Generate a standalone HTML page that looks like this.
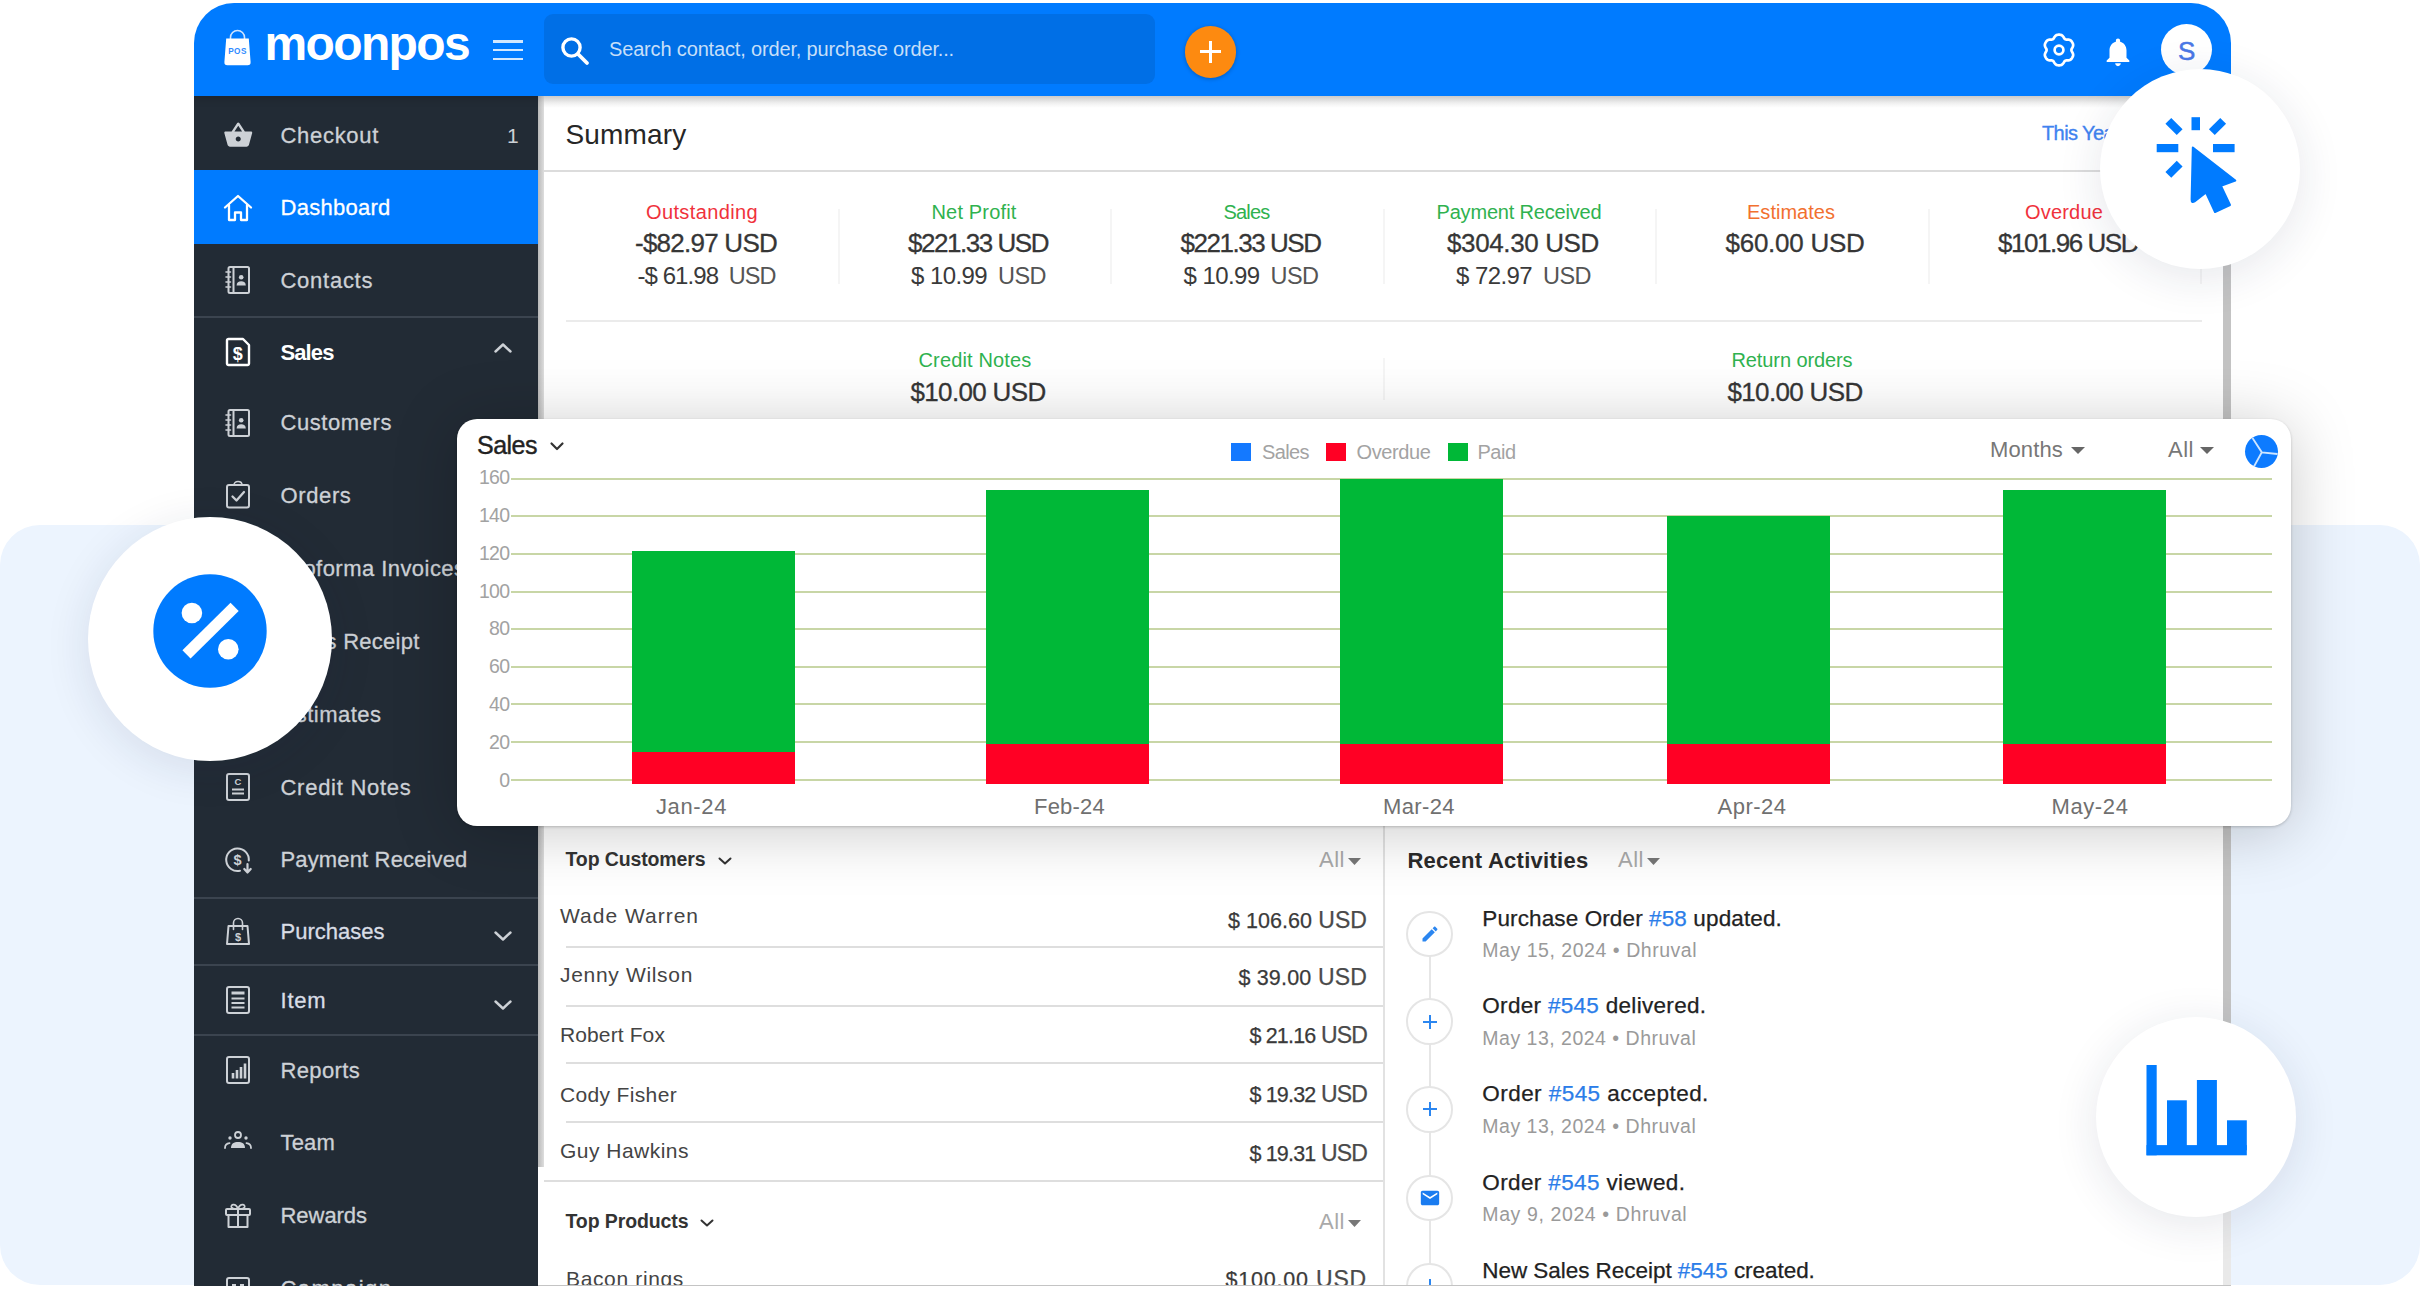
<!DOCTYPE html>
<html lang="en"><head><meta charset="utf-8"><title>moonpos dashboard</title>
<style>
html,body{margin:0;padding:0;}
body{width:2420px;height:1292px;overflow:hidden;background:#fff;position:relative;font-family:"Liberation Sans",sans-serif;}
.t{position:absolute;white-space:nowrap;line-height:1;}
svg{position:absolute;overflow:visible;}
#win{position:absolute;left:194px;top:3px;width:2037px;height:1283px;border-radius:40px 40px 0 0;overflow:hidden;background:#fff;}
</style></head><body>
<div style="position:absolute;left:0.0px;top:525.0px;width:2420.0px;height:760.0px;background:#ecf4fe;border-radius:40px;"></div>
<div id="win">
<div style="position:absolute;left:350.0px;top:93.0px;width:1679.0px;height:12.0px;background:linear-gradient(#e6e6e6,#fff);"></div>
<div style="position:absolute;left:2029.0px;top:93.0px;width:8.0px;height:1190.0px;background:#e9e9e9;"></div>
<div style="position:absolute;left:2029.0px;top:93.0px;width:8.0px;height:1030.0px;background:#c3c3c3;"></div>
<span id="t22" class="t" style="top:118.3px;font-size:28px;color:#262626;letter-spacing:0.172px;left:371.5px;">Summary</span>
<span id="t23" class="t" style="top:120.1px;font-size:20px;color:#3f83f0;letter-spacing:-0.599px;left:1848.0px;-webkit-text-stroke:.35px #3f83f0;">This Year</span>
<div style="position:absolute;left:350.0px;top:167.0px;width:1679.0px;height:2.0px;background:#dcdcdc;"></div>
<span id="t24" class="t" style="top:198.7px;font-size:20px;color:#f0323c;letter-spacing:0.376px;left:508.0px;transform:translateX(-50%);">Outstanding</span>
<span id="t25" class="t" style="top:227.4px;font-size:26px;color:#363636;letter-spacing:-0.756px;left:512.0px;transform:translateX(-50%);-webkit-text-stroke:.3px;">-$82.97 USD</span>
<span id="t26" class="t" style="top:260.7px;font-size:24px;color:#3a3a3a;letter-spacing:-0.936px;left:512.5px;transform:translateX(-50%);">-$ 61.98<span style="color:#555;font-size:23.5px;margin-left:5px"> USD</span></span>
<span id="t27" class="t" style="top:198.7px;font-size:20px;color:#2fb24f;letter-spacing:0.164px;left:780.0px;transform:translateX(-50%);">Net Profit</span>
<span id="t28" class="t" style="top:227.4px;font-size:26px;color:#363636;letter-spacing:-1.464px;left:784.0px;transform:translateX(-50%);-webkit-text-stroke:.3px;">$221.33 USD</span>
<span id="t29" class="t" style="top:260.7px;font-size:24px;color:#3a3a3a;letter-spacing:-0.567px;left:784.5px;transform:translateX(-50%);">$ 10.99<span style="color:#555;font-size:23.5px;margin-left:5px"> USD</span></span>
<span id="t30" class="t" style="top:198.7px;font-size:20px;color:#2fb24f;letter-spacing:-0.806px;left:1052.5px;transform:translateX(-50%);">Sales</span>
<span id="t31" class="t" style="top:227.4px;font-size:26px;color:#363636;letter-spacing:-1.464px;left:1056.5px;transform:translateX(-50%);-webkit-text-stroke:.3px;">$221.33 USD</span>
<span id="t32" class="t" style="top:260.7px;font-size:24px;color:#3a3a3a;letter-spacing:-0.567px;left:1057.0px;transform:translateX(-50%);">$ 10.99<span style="color:#555;font-size:23.5px;margin-left:5px"> USD</span></span>
<span id="t33" class="t" style="top:198.7px;font-size:20px;color:#2fb24f;letter-spacing:-0.180px;left:1325.0px;transform:translateX(-50%);">Payment Received</span>
<span id="t34" class="t" style="top:227.4px;font-size:26px;color:#363636;letter-spacing:-0.374px;left:1329.0px;transform:translateX(-50%);-webkit-text-stroke:.3px;">$304.30 USD</span>
<span id="t35" class="t" style="top:260.7px;font-size:24px;color:#3a3a3a;letter-spacing:-0.567px;left:1329.5px;transform:translateX(-50%);">$ 72.97<span style="color:#555;font-size:23.5px;margin-left:5px"> USD</span></span>
<span id="t36" class="t" style="top:198.7px;font-size:20px;color:#f2702f;letter-spacing:0.021px;left:1597.0px;transform:translateX(-50%);">Estimates</span>
<span id="t37" class="t" style="top:227.4px;font-size:26px;color:#363636;letter-spacing:-0.266px;left:1601.0px;transform:translateX(-50%);-webkit-text-stroke:.3px;">$60.00 USD</span>
<span id="t38" class="t" style="top:198.7px;font-size:20px;color:#f0323c;letter-spacing:0.183px;left:1870.0px;transform:translateX(-50%);">Overdue</span>
<span id="t39" class="t" style="top:227.4px;font-size:26px;color:#363636;letter-spacing:-1.464px;left:1874.0px;transform:translateX(-50%);-webkit-text-stroke:.3px;">$101.96 USD</span>
<div style="position:absolute;left:644.0px;top:206.0px;width:2.0px;height:75.0px;background:#f5f5f5;"></div>
<div style="position:absolute;left:916.4px;top:206.0px;width:2.0px;height:75.0px;background:#f5f5f5;"></div>
<div style="position:absolute;left:1189.0px;top:206.0px;width:2.0px;height:75.0px;background:#f5f5f5;"></div>
<div style="position:absolute;left:1461.0px;top:206.0px;width:2.0px;height:75.0px;background:#f5f5f5;"></div>
<div style="position:absolute;left:1734.0px;top:206.0px;width:2.0px;height:75.0px;background:#f5f5f5;"></div>
<div style="position:absolute;left:2006.0px;top:206.0px;width:2.0px;height:75.0px;background:#f5f5f5;"></div>
<div style="position:absolute;left:371.5px;top:317.0px;width:1636.0px;height:2.0px;background:#ebebeb;"></div>
<span id="t40" class="t" style="top:347.1px;font-size:20px;color:#2fb24f;letter-spacing:0.154px;left:781.0px;transform:translateX(-50%);">Credit Notes</span>
<span id="t41" class="t" style="top:376.0px;font-size:26px;color:#363636;letter-spacing:-0.666px;left:784.0px;transform:translateX(-50%);-webkit-text-stroke:.3px;">$10.00 USD</span>
<span id="t42" class="t" style="top:347.1px;font-size:20px;color:#2fb24f;letter-spacing:-0.099px;left:1598.0px;transform:translateX(-50%);">Return orders</span>
<span id="t43" class="t" style="top:376.0px;font-size:26px;color:#363636;letter-spacing:-0.666px;left:1601.0px;transform:translateX(-50%);-webkit-text-stroke:.3px;">$10.00 USD</span>
<div style="position:absolute;left:1189.0px;top:355.0px;width:2.0px;height:42.0px;background:#f5f5f5;"></div>
<div style="position:absolute;left:1188.5px;top:823.0px;width:2.0px;height:460.0px;background:#e2e2e2;"></div>
<span id="t44" class="t" style="top:847.2px;font-size:19.5px;color:#333;font-weight:700;letter-spacing:-0.121px;left:371.5px;">Top Customers</span>
<span id="t45" class="t" style="top:1208.9px;font-size:19.5px;color:#333;font-weight:700;letter-spacing:-0.102px;left:371.5px;">Top Products</span>
<svg style="left:523.5px;top:853.5px" width="14" height="8" viewBox="0 0 14 8" fill="none" stroke="#333" stroke-width="2" stroke-linecap="round" stroke-linejoin="round"><path d="M1.500 1.500 L7 6.500 L12.500 1.500"/></svg>
<svg style="left:505.5px;top:1215.5px" width="14" height="8" viewBox="0 0 14 8" fill="none" stroke="#333" stroke-width="2" stroke-linecap="round" stroke-linejoin="round"><path d="M1.500 1.500 L7 6.500 L12.500 1.500"/></svg>
<span id="t46" class="t" style="top:845.9px;font-size:22px;color:#a9a9a9;letter-spacing:0.516px;left:1125.0px;">All</span><svg style="left:1154.0px;top:854.5px" width="13" height="7" viewBox="0 0 13 7"><path d="M0 0 H13 L6.500 7 Z" fill="#777"/></svg>
<span id="t47" class="t" style="top:1208.4px;font-size:22px;color:#a9a9a9;letter-spacing:0.516px;left:1125.0px;">All</span><svg style="left:1154.0px;top:1217.0px" width="13" height="7" viewBox="0 0 13 7"><path d="M0 0 H13 L6.500 7 Z" fill="#777"/></svg>
<span id="t48" class="t" style="top:845.9px;font-size:22px;color:#a9a9a9;letter-spacing:0.516px;left:1424.0px;">All</span><svg style="left:1453.0px;top:854.5px" width="13" height="7" viewBox="0 0 13 7"><path d="M0 0 H13 L6.500 7 Z" fill="#777"/></svg>
<span id="t49" class="t" style="top:901.5px;font-size:21px;color:#444;letter-spacing:1.001px;left:366.0px;">Wade Warren</span>
<span id="t50" class="t" style="top:905.8px;font-size:21.5px;color:#3a3a3a;letter-spacing:0.029px;right:864.0px;-webkit-text-stroke:.25px;">$ 106.60<span style="color:#4a4a4a;font-size:23px"> USD</span></span>
<span id="t51" class="t" style="top:960.7px;font-size:21px;color:#444;letter-spacing:0.676px;left:366.0px;">Jenny Wilson</span>
<span id="t52" class="t" style="top:963.1px;font-size:21.5px;color:#3a3a3a;letter-spacing:0.165px;right:864.0px;-webkit-text-stroke:.25px;">$ 39.00<span style="color:#4a4a4a;font-size:23px"> USD</span></span>
<span id="t53" class="t" style="top:1021.0px;font-size:21px;color:#444;letter-spacing:0.113px;left:366.0px;">Robert Fox</span>
<span id="t54" class="t" style="top:1020.8px;font-size:21.5px;color:#3a3a3a;letter-spacing:-0.835px;right:864.0px;-webkit-text-stroke:.25px;">$ 21.16<span style="color:#4a4a4a;font-size:23px"> USD</span></span>
<span id="t55" class="t" style="top:1080.5px;font-size:21px;color:#444;letter-spacing:0.345px;left:366.0px;">Cody Fisher</span>
<span id="t56" class="t" style="top:1080.4px;font-size:21.5px;color:#3a3a3a;letter-spacing:-0.835px;right:864.0px;-webkit-text-stroke:.25px;">$ 19.32<span style="color:#4a4a4a;font-size:23px"> USD</span></span>
<span id="t57" class="t" style="top:1137.2px;font-size:21px;color:#444;letter-spacing:0.482px;left:366.0px;">Guy Hawkins</span>
<span id="t58" class="t" style="top:1138.5px;font-size:21.5px;color:#3a3a3a;letter-spacing:-0.835px;right:864.0px;-webkit-text-stroke:.25px;">$ 19.31<span style="color:#4a4a4a;font-size:23px"> USD</span></span>
<div style="position:absolute;left:371.5px;top:943.0px;width:817.0px;height:2.0px;background:#dedede;"></div>
<div style="position:absolute;left:371.5px;top:1001.5px;width:817.0px;height:2.0px;background:#dedede;"></div>
<div style="position:absolute;left:371.5px;top:1059.0px;width:817.0px;height:2.0px;background:#dedede;"></div>
<div style="position:absolute;left:371.5px;top:1117.5px;width:817.0px;height:2.0px;background:#dedede;"></div>
<div style="position:absolute;left:350.0px;top:1177.0px;width:839.0px;height:2.0px;background:#dedede;"></div>
<span id="t59" class="t" style="top:1265.0px;font-size:21px;color:#444;letter-spacing:0.645px;left:372.0px;">Bacon rings</span>
<span id="t60" class="t" style="top:1264.8px;font-size:21.5px;color:#3a3a3a;letter-spacing:0.803px;right:864.0px;-webkit-text-stroke:.25px;">$100.00<span style="color:#4a4a4a;font-size:23px"> USD</span></span>
<span id="t61" class="t" style="top:847.4px;font-size:22px;color:#2b2b2b;font-weight:700;letter-spacing:0.266px;left:1213.4px;">Recent Activities</span>
<div style="position:absolute;left:1234.8px;top:931.0px;width:2.0px;height:360.0px;background:#e6e6e6;"></div>
<div style="position:absolute;left:1212.4px;top:907.6px;width:42.8px;height:42.8px;background:#fff;border:2px solid #e5e5e5;border-radius:50%;"></div>
<span id="t62" class="t" style="top:904.7px;font-size:22.5px;color:#222;letter-spacing:0.116px;left:1288.3px;-webkit-text-stroke:.25px;">Purchase Order <span style="color:#2b7de9">#58</span> updated.</span>
<span id="t63" class="t" style="top:938.2px;font-size:19.5px;color:#9a9a9a;letter-spacing:0.535px;left:1288.3px;">May 15, 2024 • Dhruval</span>
<svg style="left:1225.8px;top:921.0px" width="20" height="20" viewBox="0 0 24 24"><path fill="#2b86f0" d="M3 17.250V21h3.750L17.810 9.940l-3.750-3.750L3 17.250zM20.710 7.040c.39-.39.39-1.020 0-1.410l-2.340-2.340c-.39-.39-1.020-.39-1.410 0l-1.830 1.830 3.750 3.750 1.830-1.830z"/></svg>
<div style="position:absolute;left:1212.4px;top:995.3px;width:42.8px;height:42.8px;background:#fff;border:2px solid #e5e5e5;border-radius:50%;"></div>
<span id="t64" class="t" style="top:992.4px;font-size:22.5px;color:#222;letter-spacing:0.303px;left:1288.3px;-webkit-text-stroke:.25px;">Order <span style="color:#2b7de9">#545</span> delivered.</span>
<span id="t65" class="t" style="top:1025.9px;font-size:19.5px;color:#9a9a9a;letter-spacing:0.499px;left:1288.3px;">May 13, 2024 • Dhruval</span>
<div style="position:absolute;left:1228.8px;top:1017.7px;width:14.0px;height:2.0px;background:#2b86f0;"></div>
<div style="position:absolute;left:1234.8px;top:1011.7px;width:2.0px;height:14.0px;background:#2b86f0;"></div>
<div style="position:absolute;left:1212.4px;top:1083.0px;width:42.8px;height:42.8px;background:#fff;border:2px solid #e5e5e5;border-radius:50%;"></div>
<span id="t66" class="t" style="top:1080.1px;font-size:22.5px;color:#222;letter-spacing:0.442px;left:1288.3px;-webkit-text-stroke:.25px;">Order <span style="color:#2b7de9">#545</span> accepted.</span>
<span id="t67" class="t" style="top:1113.6px;font-size:19.5px;color:#9a9a9a;letter-spacing:0.499px;left:1288.3px;">May 13, 2024 • Dhruval</span>
<div style="position:absolute;left:1228.8px;top:1105.4px;width:14.0px;height:2.0px;background:#2b86f0;"></div>
<div style="position:absolute;left:1234.8px;top:1099.4px;width:2.0px;height:14.0px;background:#2b86f0;"></div>
<div style="position:absolute;left:1212.4px;top:1171.6px;width:42.8px;height:42.8px;background:#fff;border:2px solid #e5e5e5;border-radius:50%;"></div>
<span id="t68" class="t" style="top:1168.7px;font-size:22.5px;color:#222;letter-spacing:0.368px;left:1288.3px;-webkit-text-stroke:.25px;">Order <span style="color:#2b7de9">#545</span> viewed.</span>
<span id="t69" class="t" style="top:1202.2px;font-size:19.5px;color:#9a9a9a;letter-spacing:0.610px;left:1288.3px;">May 9, 2024 • Dhruval</span>
<svg style="left:1224.8px;top:1184.0px" width="22" height="22" viewBox="0 0 24 24"><path fill="#1a7cf0" d="M20 4H4c-1.100 0-1.990.9-1.990 2L2 18c0 1.100.9 2 2 2h16c1.100 0 2-.9 2-2V6c0-1.100-.9-2-2-2zm0 4l-8 5-8-5V6l8 5 8-5v2z"/></svg>
<div style="position:absolute;left:1212.4px;top:1259.6px;width:42.8px;height:42.8px;background:#fff;border:2px solid #e5e5e5;border-radius:50%;"></div>
<span id="t70" class="t" style="top:1256.7px;font-size:22.5px;color:#222;letter-spacing:-0.047px;left:1288.3px;-webkit-text-stroke:.25px;">New Sales Receipt <span style="color:#2b7de9">#545</span> created.</span>
<div style="position:absolute;left:1228.8px;top:1282.0px;width:14.0px;height:2.0px;background:#2b86f0;"></div>
<div style="position:absolute;left:1234.8px;top:1276.0px;width:2.0px;height:14.0px;background:#2b86f0;"></div>
<div style="position:absolute;left:0.0px;top:93.0px;width:344.0px;height:1190.0px;background:#222b35;"></div>
<div style="position:absolute;left:344.0px;top:93.0px;width:6.0px;height:1190.0px;background:#fff;"></div>
<div style="position:absolute;left:344.0px;top:93.0px;width:6.0px;height:1071.0px;background:linear-gradient(90deg,#b9b9b9,#dedede);"></div>
<div style="position:absolute;left:0.0px;top:167.0px;width:344.0px;height:73.5px;background:#007bff;"></div>
<div style="position:absolute;left:0.0px;top:313.0px;width:344.0px;height:2.0px;background:#3b444f;"></div>
<div style="position:absolute;left:0.0px;top:893.5px;width:344.0px;height:2.0px;background:#3b444f;"></div>
<div style="position:absolute;left:0.0px;top:961.0px;width:344.0px;height:2.0px;background:#3b444f;"></div>
<div style="position:absolute;left:0.0px;top:1031.0px;width:344.0px;height:2.0px;background:#3b444f;"></div>
<span id="t4" class="t" style="top:122.1px;font-size:22px;color:#cdd1d6;letter-spacing:0.693px;left:86.5px;-webkit-text-stroke:.3px #cdd1d6;">Checkout</span>
<span id="t5" class="t" style="top:194.1px;font-size:22px;color:#fff;letter-spacing:0.262px;left:86.5px;-webkit-text-stroke:.3px #fff;">Dashboard</span>
<span id="t6" class="t" style="top:266.6px;font-size:22px;color:#cdd1d6;letter-spacing:0.734px;left:86.5px;-webkit-text-stroke:.3px #cdd1d6;">Contacts</span>
<svg style="left:29.7px;top:261.7px" width="28" height="30" viewBox="0 0 28 30" fill="none" stroke="#cdd1d6" stroke-width="2" stroke-linejoin="round" stroke-linecap="round"><rect x="4.5" y="2" width="20.5" height="26" rx="1.5"/><path d="M9.5 2 V28"/><path d="M2 7 H6.5 M2 12 H6.5 M2 17 H6.5 M2 22 H6.5" stroke-width="1.6"/><circle cx="17.2" cy="12.2" r="2.3" fill="#cdd1d6" stroke="none"/><path d="M12.6 20.5 c0-3 2-4.2 4.6-4.200 s4.600 1.200 4.600 4.200 z" fill="#cdd1d6" stroke="none"/></svg>
<span id="t7" class="t" style="top:339.0px;font-size:22px;color:#fff;font-weight:700;letter-spacing:-0.900px;left:86.5px;">Sales</span>
<svg style="left:29.7px;top:334.1px" width="28" height="30" viewBox="0 0 28 30" fill="none" stroke="#fff" stroke-width="2" stroke-linejoin="round" stroke-linecap="round"><path d="M3 3.500 a1.500 1.500 0 0 1 1.500-1.500 H19 L25 8 V26.500 a1.500 1.500 0 0 1-1.500 1.500 H4.500 a1.500 1.500 0 0 1-1.500-1.500 Z" stroke-width="2.4"/><text x="13.800" y="23" font-family="Liberation Sans, sans-serif" font-size="18" font-weight="700" fill="#fff" stroke="none" text-anchor="middle">$</text></svg>
<span id="t8" class="t" style="top:409.4px;font-size:22px;color:#cdd1d6;letter-spacing:0.571px;left:86.5px;-webkit-text-stroke:.3px #cdd1d6;">Customers</span>
<svg style="left:29.7px;top:404.5px" width="28" height="30" viewBox="0 0 28 30" fill="none" stroke="#cdd1d6" stroke-width="2" stroke-linejoin="round" stroke-linecap="round"><rect x="4.5" y="2" width="20.5" height="26" rx="1.5"/><path d="M9.5 2 V28"/><path d="M2 7 H6.5 M2 12 H6.5 M2 17 H6.5 M2 22 H6.5" stroke-width="1.6"/><circle cx="17.2" cy="12.2" r="2.3" fill="#cdd1d6" stroke="none"/><path d="M12.6 20.5 c0-3 2-4.2 4.6-4.200 s4.600 1.200 4.600 4.200 z" fill="#cdd1d6" stroke="none"/></svg>
<span id="t9" class="t" style="top:481.6px;font-size:22px;color:#cdd1d6;letter-spacing:0.625px;left:86.5px;-webkit-text-stroke:.3px #cdd1d6;">Orders</span>
<svg style="left:29.7px;top:476.7px" width="28" height="30" viewBox="0 0 28 30" fill="none" stroke="#cdd1d6" stroke-width="2" stroke-linejoin="round" stroke-linecap="round"><rect x="3" y="5" width="22" height="22.500" rx="2"/><path d="M10 5 c0-2 1.500-3.500 4-3.500 s4 1.500 4 3.500" stroke-width="1.600"/><path d="M8.500 16.500 L12.500 20.500 L20 12" stroke-width="2.300"/></svg>
<span id="t10" class="t" style="top:555.1px;font-size:22px;color:#cdd1d6;letter-spacing:0.453px;left:86.5px;-webkit-text-stroke:.3px #cdd1d6;">Proforma Invoices</span>
<svg style="left:29.7px;top:550.2px" width="28" height="30" viewBox="0 0 28 30" fill="none" stroke="#cdd1d6" stroke-width="2" stroke-linejoin="round" stroke-linecap="round"><rect x="3" y="2" width="22" height="26" rx="2"/></svg>
<span id="t11" class="t" style="top:628.1px;font-size:22px;color:#cdd1d6;letter-spacing:0.250px;left:86.5px;-webkit-text-stroke:.3px #cdd1d6;">Sales Receipt</span>
<svg style="left:29.7px;top:623.2px" width="28" height="30" viewBox="0 0 28 30" fill="none" stroke="#cdd1d6" stroke-width="2" stroke-linejoin="round" stroke-linecap="round"><rect x="3" y="2" width="22" height="26" rx="2"/></svg>
<span id="t12" class="t" style="top:701.1px;font-size:22px;color:#cdd1d6;letter-spacing:0.490px;left:86.5px;-webkit-text-stroke:.3px #cdd1d6;">Estimates</span>
<svg style="left:29.7px;top:696.2px" width="28" height="30" viewBox="0 0 28 30" fill="none" stroke="#cdd1d6" stroke-width="2" stroke-linejoin="round" stroke-linecap="round"><rect x="3" y="2" width="22" height="26" rx="2"/></svg>
<span id="t13" class="t" style="top:773.6px;font-size:22px;color:#cdd1d6;letter-spacing:0.727px;left:86.5px;-webkit-text-stroke:.3px #cdd1d6;">Credit Notes</span>
<svg style="left:29.7px;top:768.7px" width="28" height="30" viewBox="0 0 28 30" fill="none" stroke="#cdd1d6" stroke-width="2" stroke-linejoin="round" stroke-linecap="round"><rect x="3" y="2" width="22" height="26" rx="2"/><text x="14" y="13" font-family="Liberation Sans, sans-serif" font-size="9.500" font-weight="700" fill="#cdd1d6" stroke="none" text-anchor="middle">C</text><path d="M8 17.500 H20 M8 21.500 H20" stroke-width="2.200" stroke-linecap="butt"/></svg>
<span id="t14" class="t" style="top:846.4px;font-size:22px;color:#cdd1d6;letter-spacing:0.146px;left:86.5px;-webkit-text-stroke:.3px #cdd1d6;">Payment Received</span>
<svg style="left:29.7px;top:841.5px" width="28" height="30" viewBox="0 0 28 30" fill="none" stroke="#cdd1d6" stroke-width="2" stroke-linejoin="round" stroke-linecap="round"><path d="M24.800 15.500 A11.300 11.300 0 1 0 16 25.800" stroke-width="2"/><text x="13.500" y="20" font-family="Liberation Sans, sans-serif" font-size="14.500" font-weight="700" fill="#cdd1d6" stroke="none" text-anchor="middle">$</text><path d="M23.500 19 V27 M20.300 24 L23.500 27.500 L26.700 24" stroke-width="2.200"/></svg>
<span id="t15" class="t" style="top:917.6px;font-size:22px;color:#d9dde6;letter-spacing:0.005px;left:86.5px;-webkit-text-stroke:.3px #d9dde6;">Purchases</span>
<svg style="left:29.7px;top:912.7px" width="28" height="30" viewBox="0 0 28 30" fill="none" stroke="#cdd1d6" stroke-width="2" stroke-linejoin="round" stroke-linecap="round"><path d="M4.500 10 H23.500 L25 28 H3 Z"/><path d="M9.500 13.500 V7 a4.500 4.500 0 0 1 9 0 V13.500" stroke-width="1.600"/><text x="14" y="25" font-family="Liberation Sans, sans-serif" font-size="11" font-weight="700" fill="#cdd1d6" stroke="none" text-anchor="middle">$</text></svg>
<span id="t16" class="t" style="top:987.1px;font-size:22px;color:#d9dde6;letter-spacing:0.801px;left:86.5px;-webkit-text-stroke:.3px #d9dde6;">Item</span>
<svg style="left:29.7px;top:982.2px" width="28" height="30" viewBox="0 0 28 30" fill="none" stroke="#cdd1d6" stroke-width="2" stroke-linejoin="round" stroke-linecap="round"><rect x="3" y="2" width="22" height="26" rx="2"/><path d="M7.500 8 H20.500" stroke-width="3" stroke-linecap="butt"/><path d="M7.500 13.500 H20.500 M7.500 18 H20.500 M7.500 22.500 H20.500" stroke-width="2" stroke-linecap="butt"/></svg>
<span id="t17" class="t" style="top:1056.6px;font-size:22px;color:#cdd1d6;letter-spacing:0.350px;left:86.5px;-webkit-text-stroke:.3px #cdd1d6;">Reports</span>
<svg style="left:29.7px;top:1051.7px" width="28" height="30" viewBox="0 0 28 30" fill="none" stroke="#cdd1d6" stroke-width="2" stroke-linejoin="round" stroke-linecap="round"><rect x="3" y="2" width="22" height="26" rx="2"/><path d="M9 23.500 V18 M13 23.500 V15 M17 23.500 V12 M21 23.500 V8.500" stroke-width="2.600" stroke-linecap="butt"/></svg>
<span id="t18" class="t" style="top:1129.2px;font-size:22px;color:#cdd1d6;letter-spacing:0.176px;left:86.5px;-webkit-text-stroke:.3px #cdd1d6;">Team</span>
<svg style="left:29.7px;top:1124.3px" width="28" height="30" viewBox="0 0 28 30" fill="none" stroke="#cdd1d6" stroke-width="2" stroke-linejoin="round" stroke-linecap="round"><circle cx="14" cy="8" r="3" stroke-width="1.800"/><circle cx="6" cy="11" r="1.700" fill="#cdd1d6" stroke="none"/><circle cx="22" cy="11" r="1.700" fill="#cdd1d6" stroke="none"/><path d="M7 21 c0-4.500 3-6 7-6 s7 1.500 7 6 z" fill="#cdd1d6" stroke="none"/><path d="M1 21 c0-3 1.500-4.500 4.500-4.800 M27 21 c0-3-1.500-4.500-4.500-4.800" stroke-width="1.800"/></svg>
<span id="t19" class="t" style="top:1202.2px;font-size:22px;color:#cdd1d6;letter-spacing:-0.045px;left:86.5px;-webkit-text-stroke:.3px #cdd1d6;">Rewards</span>
<svg style="left:29.7px;top:1197.3px" width="28" height="30" viewBox="0 0 28 30" fill="none" stroke="#cdd1d6" stroke-width="2" stroke-linejoin="round" stroke-linecap="round"><rect x="2" y="9" width="24" height="6" rx="1"/><path d="M4.500 15 V27 H23.500 V15 M14 9 V27"/><path d="M14 9 c-2-6-8-5-6.500-1.500 c1 2 4 1.500 6.500 1.500 c2.500 0 5.500 .5 6.500-1.500 c1.500-3.500-4.500-4.500-6.500 1.500" stroke-width="1.700"/></svg>
<span id="t20" class="t" style="top:1275.1px;font-size:22px;color:#cdd1d6;letter-spacing:1.465px;left:86.5px;-webkit-text-stroke:.3px #cdd1d6;">Campaign</span>
<svg style="left:29.7px;top:1270.2px" width="28" height="30" viewBox="0 0 28 30" fill="none" stroke="#cdd1d6" stroke-width="2" stroke-linejoin="round" stroke-linecap="round"><rect x="3" y="5" width="22" height="22" rx="2"/><rect x="8" y="11" width="4" height="4" fill="#cdd1d6" stroke="none"/><rect x="16" y="11" width="4" height="4" fill="#cdd1d6" stroke="none"/></svg>
<svg style="left:28.5px;top:116.5px" width="30.500" height="30.500" viewBox="0 0 24 24"><path fill="#cdd1d6" d="M17.210 9l-4.380-6.560c-.19-.28-.51-.42-.83-.42-.32 0-.64.14-.83.43L6.790 9H2c-.55 0-1 .45-1 1 0 .09.010.18.040.27l2.540 9.270c.23.84 1 1.460 1.920 1.460h13c.92 0 1.690-.62 1.930-1.460l2.540-9.270L23 10c0-.55-.45-1-1-1h-4.790zM9 9l3-4.400L15 9H9zm3 8c-1.100 0-2-.9-2-2s.9-2 2-2 2 .9 2 2-.9 2-2 2z"/></svg>
<svg style="left:28.7px;top:190.5px" width="30" height="28" viewBox="0 0 30 28" fill="none" stroke="#fff" stroke-width="2.300" stroke-linejoin="round" stroke-linecap="round"><path d="M2 13.500 L15 2 L28 13.500"/><path d="M6 11 V26 H12 V18.500 H18 V26 H24 V11"/></svg>
<span id="t21" class="t" style="top:121.7px;font-size:21px;color:#cdd1d6;left:313.0px;">1</span>
<svg style="left:299.7px;top:340.0px" width="18" height="10" viewBox="0 0 18 10" fill="none" stroke="#cdd1d6" stroke-width="2.400" stroke-linecap="round" stroke-linejoin="round"><path d="M1.500 8.500 L9 1.500 L16.500 8.500"/></svg>
<svg style="left:299.7px;top:927.5px" width="18" height="10" viewBox="0 0 18 10" fill="none" stroke="#cdd1d6" stroke-width="2.400" stroke-linecap="round" stroke-linejoin="round"><path d="M1.500 1.500 L9 8.500 L16.500 1.500"/></svg>
<svg style="left:299.7px;top:996.5px" width="18" height="10" viewBox="0 0 18 10" fill="none" stroke="#cdd1d6" stroke-width="2.400" stroke-linecap="round" stroke-linejoin="round"><path d="M1.500 1.500 L9 8.500 L16.500 1.500"/></svg>
<div style="position:absolute;left:0.0px;top:0.0px;width:2037.0px;height:93.0px;background:#007bff;box-shadow:0 2px 9px rgba(0,0,0,.18);"></div>
<svg style="left:29px;top:25px" width="30" height="40" viewBox="0 0 30 40"><path d="M7.5 12 V9.5 a7 7 0 0 1 14 0 V12" fill="none" stroke="#cfe4ff" stroke-width="1.6"/><path d="M3.2 10.5 H25.8 L27.6 34 a3 3 0 0 1 -3 3.2 H4.4 a3 3 0 0 1 -3 -3.2 Z" fill="#fff"/><text x="14.5" y="26.3" font-family="Liberation Sans, sans-serif" font-weight="700" font-size="8.2" fill="#2f8bff" text-anchor="middle" letter-spacing=".4">POS</text></svg>
<span id="t1" class="t" style="top:17.2px;font-size:48px;color:#fff;font-weight:700;letter-spacing:-1.641px;left:70.5px;">moonpos</span>
<div style="position:absolute;left:298.5px;top:37.3px;width:30.0px;height:2.4px;background:rgba(255,255,255,.82);"></div>
<div style="position:absolute;left:298.5px;top:46.1px;width:30.0px;height:2.4px;background:rgba(255,255,255,.82);"></div>
<div style="position:absolute;left:298.5px;top:54.8px;width:30.0px;height:2.4px;background:rgba(255,255,255,.82);"></div>
<div style="position:absolute;left:350.0px;top:11.0px;width:611.0px;height:69.5px;background:#006fe6;border-radius:9px;"></div>
<svg style="left:365px;top:32px" width="32" height="32" viewBox="0 0 32 32"><circle cx="12.5" cy="12.5" r="8.6" fill="none" stroke="#fff" stroke-width="3.4"/><path d="M19 19 L28 28" stroke="#fff" stroke-width="3.8" stroke-linecap="round"/></svg>
<span id="t2" class="t" style="top:35.6px;font-size:20px;color:rgba(255,255,255,.78);letter-spacing:-0.158px;left:415.0px;">Search contact, order, purchase order...</span>
<div style="position:absolute;left:990.5px;top:23.0px;width:51.5px;height:51.5px;background:#fd8a10;border-radius:50%;box-shadow:0 1px 4px rgba(0,0,0,.25);"></div>
<div style="position:absolute;left:1005.5px;top:47.3px;width:21.5px;height:3.0px;background:#fff;"></div>
<div style="position:absolute;left:1014.8px;top:38.0px;width:3.0px;height:21.5px;background:#fff;"></div>
<svg style="left:1846.8px;top:29.0px" width="36" height="36" viewBox="0 0 36 36" fill="none" stroke="#fff" stroke-width="2.700" stroke-linejoin="round"><path d="M18.00 2.70 L18.80 2.72 L19.59 2.83 L20.37 3.06 L21.09 3.45 L21.74 4.03 L22.31 4.73 L22.80 5.50 L23.24 6.23 L23.69 6.84 L24.20 7.26 L24.82 7.49 L25.57 7.58 L26.42 7.60 L27.33 7.63 L28.23 7.77 L29.05 8.05 L29.76 8.48 L30.34 9.03 L30.83 9.67 L31.25 10.35 L31.63 11.06 L31.94 11.79 L32.13 12.58 L32.14 13.40 L31.97 14.26 L31.64 15.10 L31.22 15.91 L30.81 16.65 L30.51 17.34 L30.40 18.00 L30.51 18.66 L30.81 19.35 L31.22 20.09 L31.64 20.90 L31.97 21.74 L32.14 22.60 L32.13 23.42 L31.94 24.21 L31.63 24.94 L31.25 25.65 L30.83 26.33 L30.34 26.97 L29.76 27.52 L29.05 27.95 L28.23 28.23 L27.33 28.37 L26.42 28.40 L25.57 28.42 L24.82 28.51 L24.20 28.74 L23.69 29.16 L23.24 29.77 L22.80 30.50 L22.31 31.27 L21.74 31.97 L21.09 32.55 L20.37 32.94 L19.59 33.17 L18.80 33.28 L18.00 33.30 L17.20 33.28 L16.41 33.17 L15.63 32.94 L14.91 32.55 L14.26 31.97 L13.69 31.27 L13.20 30.50 L12.76 29.77 L12.31 29.16 L11.80 28.74 L11.18 28.51 L10.43 28.42 L9.58 28.40 L8.67 28.37 L7.77 28.23 L6.95 27.95 L6.24 27.52 L5.66 26.97 L5.17 26.33 L4.75 25.65 L4.37 24.94 L4.06 24.21 L3.87 23.42 L3.86 22.60 L4.03 21.74 L4.36 20.90 L4.78 20.09 L5.19 19.35 L5.49 18.66 L5.60 18.00 L5.49 17.34 L5.19 16.65 L4.78 15.91 L4.36 15.10 L4.03 14.26 L3.86 13.40 L3.87 12.58 L4.06 11.79 L4.37 11.06 L4.75 10.35 L5.17 9.67 L5.66 9.03 L6.24 8.48 L6.95 8.05 L7.77 7.77 L8.67 7.63 L9.58 7.60 L10.43 7.58 L11.18 7.49 L11.80 7.26 L12.31 6.84 L12.76 6.23 L13.20 5.50 L13.69 4.73 L14.26 4.03 L14.91 3.45 L15.63 3.06 L16.41 2.83 L17.20 2.72 Z"/><circle cx="18" cy="18" r="4.400"/></svg>
<svg style="left:1906.7px;top:31.5px" width="34" height="34" viewBox="0 0 24 24"><path fill="#fff" d="M12 22c1.1 0 2-.9 2-2h-4c0 1.1.89 2 2 2zm6-6v-5c0-3.07-1.64-5.64-4.5-6.32V4c0-.83-.67-1.500-1.500-1.500s-1.500.67-1.500 1.500v.68C7.630 5.360 6 7.920 6 11v5l-2 2v1h16v-1l-2-2z"/></svg>
<div style="position:absolute;left:1967.0px;top:21.0px;width:51.0px;height:51.0px;background:#fff;border-radius:50%;"></div>
<span id="t3" class="t" style="top:34.8px;font-size:26px;color:#4a78e6;left:1992.7px;transform:translateX(-50%);-webkit-text-stroke:.5px #4a78e6;">S</span>
<div style="position:absolute;left:344.0px;top:1281.6px;width:1693.0px;height:1.6px;background:#c4c4c4;"></div>
</div>
<div style="position:absolute;left:457px;top:419px;width:1834px;height:407px;background:#fff;border-radius:20px;box-shadow:0 1px 3px rgba(0,0,0,.2),0 5px 64px rgba(0,0,0,.21);"><div style="position:absolute;left:54.0px;top:59.0px;width:1761.0px;height:2.0px;background:#c8d6a6;"></div>
<span class="t" style="right:1781.7px;top:49.0px;font-size:19.5px;letter-spacing:-.7px;color:#a2a2a2;">160</span>
<div style="position:absolute;left:54.0px;top:96.3px;width:1761.0px;height:2.0px;background:#c8d6a6;"></div>
<span class="t" style="right:1781.7px;top:86.8px;font-size:19.5px;letter-spacing:-.7px;color:#a2a2a2;">140</span>
<div style="position:absolute;left:54.0px;top:133.5px;width:1761.0px;height:2.0px;background:#c8d6a6;"></div>
<span class="t" style="right:1781.7px;top:124.7px;font-size:19.5px;letter-spacing:-.7px;color:#a2a2a2;">120</span>
<div style="position:absolute;left:54.0px;top:171.5px;width:1761.0px;height:2.0px;background:#c8d6a6;"></div>
<span class="t" style="right:1781.7px;top:162.5px;font-size:19.5px;letter-spacing:-.7px;color:#a2a2a2;">100</span>
<div style="position:absolute;left:54.0px;top:209.0px;width:1761.0px;height:2.0px;background:#c8d6a6;"></div>
<span class="t" style="right:1781.7px;top:200.3px;font-size:19.5px;letter-spacing:-.7px;color:#a2a2a2;">80</span>
<div style="position:absolute;left:54.0px;top:246.5px;width:1761.0px;height:2.0px;background:#c8d6a6;"></div>
<span class="t" style="right:1781.7px;top:238.1px;font-size:19.5px;letter-spacing:-.7px;color:#a2a2a2;">60</span>
<div style="position:absolute;left:54.0px;top:284.0px;width:1761.0px;height:2.0px;background:#c8d6a6;"></div>
<span class="t" style="right:1781.7px;top:276.0px;font-size:19.5px;letter-spacing:-.7px;color:#a2a2a2;">40</span>
<div style="position:absolute;left:54.0px;top:322.0px;width:1761.0px;height:2.0px;background:#c8d6a6;"></div>
<span class="t" style="right:1781.7px;top:313.8px;font-size:19.5px;letter-spacing:-.7px;color:#a2a2a2;">20</span>
<div style="position:absolute;left:54.0px;top:359.7px;width:1761.0px;height:2.0px;background:#c8d6a6;"></div>
<span class="t" style="right:1781.7px;top:351.6px;font-size:19.5px;letter-spacing:-.7px;color:#a2a2a2;">0</span>
<div style="position:absolute;left:174.5px;top:132.0px;width:163.0px;height:201.0px;background:#00b837;"></div>
<div style="position:absolute;left:174.5px;top:333.0px;width:163.0px;height:32.0px;background:#ff0024;"></div>
<div style="position:absolute;left:529.0px;top:71.0px;width:162.5px;height:253.5px;background:#00b837;"></div>
<div style="position:absolute;left:529.0px;top:324.5px;width:162.5px;height:40.5px;background:#ff0024;"></div>
<div style="position:absolute;left:883.0px;top:60.0px;width:162.5px;height:264.5px;background:#00b837;"></div>
<div style="position:absolute;left:883.0px;top:324.5px;width:162.5px;height:40.5px;background:#ff0024;"></div>
<div style="position:absolute;left:1210.0px;top:97.0px;width:162.5px;height:227.5px;background:#00b837;"></div>
<div style="position:absolute;left:1210.0px;top:324.5px;width:162.5px;height:40.5px;background:#ff0024;"></div>
<div style="position:absolute;left:1546.0px;top:71.0px;width:163.0px;height:253.5px;background:#00b837;"></div>
<div style="position:absolute;left:1546.0px;top:324.5px;width:163.0px;height:40.5px;background:#ff0024;"></div>
<span id="t71" class="t" style="top:376.9px;font-size:22px;color:#707070;letter-spacing:0.620px;left:234.5px;transform:translateX(-50%);">Jan-24</span>
<span id="t72" class="t" style="top:376.9px;font-size:22px;color:#707070;letter-spacing:0.214px;left:612.5px;transform:translateX(-50%);">Feb-24</span>
<span id="t73" class="t" style="top:376.9px;font-size:22px;color:#707070;letter-spacing:0.385px;left:962.0px;transform:translateX(-50%);">Mar-24</span>
<span id="t74" class="t" style="top:376.9px;font-size:22px;color:#707070;letter-spacing:0.492px;left:1295.0px;transform:translateX(-50%);">Apr-24</span>
<span id="t75" class="t" style="top:376.9px;font-size:22px;color:#707070;letter-spacing:0.607px;left:1633.0px;transform:translateX(-50%);">May-24</span>
<span id="t76" class="t" style="top:13.8px;font-size:25px;color:#222;letter-spacing:-0.509px;left:20.0px;-webkit-text-stroke:.4px #222;">Sales</span>
<svg style="left:93.0px;top:22.5px" width="14" height="9" viewBox="0 0 14 9" fill="none" stroke="#333" stroke-width="2.200" stroke-linecap="round" stroke-linejoin="round"><path d="M1.500 1.500 L7 7 L12.500 1.500"/></svg>
<div style="position:absolute;left:774.0px;top:23.5px;width:20.0px;height:18.5px;background:#1479ff;"></div>
<span id="t77" class="t" style="top:23.1px;font-size:20px;color:#a3a3a3;letter-spacing:-0.606px;left:805.0px;">Sales</span>
<div style="position:absolute;left:869.0px;top:23.5px;width:20.0px;height:18.5px;background:#ff0024;"></div>
<span id="t78" class="t" style="top:23.1px;font-size:20px;color:#a3a3a3;letter-spacing:-0.388px;left:899.5px;">Overdue</span>
<div style="position:absolute;left:990.5px;top:23.5px;width:20.0px;height:18.5px;background:#00b837;"></div>
<span id="t79" class="t" style="top:23.1px;font-size:20px;color:#a3a3a3;letter-spacing:-0.508px;left:1020.5px;">Paid</span>
<span id="t80" class="t" style="top:19.9px;font-size:22px;color:#777;letter-spacing:0.141px;left:1533.0px;">Months</span>
<svg style="left:1613.5px;top:27.5px" width="14" height="7" viewBox="0 0 14 7"><path d="M0 0 H14 L7 7 Z" fill="#666"/></svg>
<span id="t81" class="t" style="top:19.9px;font-size:22px;color:#777;letter-spacing:0.516px;left:1711.0px;">All</span>
<svg style="left:1742.5px;top:27.5px" width="14" height="7" viewBox="0 0 14 7"><path d="M0 0 H14 L7 7 Z" fill="#666"/></svg>
<svg style="left:1787.5px;top:15.5px" width="33" height="33" viewBox="0 0 33 33"><circle cx="16.500" cy="16.500" r="16.500" fill="#0d7bff"/><path d="M7.500 3 L16.800 17.300 L32.500 19 M16.800 17.300 L9 31.500" stroke="#cfe6ff" stroke-width="1.800" fill="none"/></svg></div>
<div style="position:absolute;left:87.5px;top:517.0px;width:244.0px;height:244.0px;background:#fff;border-radius:50%;box-shadow:0 8px 46px rgba(30,40,70,.11);"></div>
<svg style="left:153px;top:574px" width="114" height="114" viewBox="0 0 114 114"><circle cx="57" cy="57" r="56.700" fill="#007bff"/><circle cx="38.900" cy="39" r="10.300" fill="#fff"/><circle cx="75.300" cy="75.300" r="10.300" fill="#fff"/><path d="M33.500 80.400 L81.600 32.800" stroke="#fff" stroke-width="11.600"/></svg>
<div style="position:absolute;left:2099.7px;top:69.0px;width:200.0px;height:200.0px;background:#fff;border-radius:50%;box-shadow:0 8px 46px rgba(30,40,70,.11);"></div>
<svg style="left:2150px;top:110px" width="100" height="110" viewBox="2150 110 100 110" fill="#007bff"><rect x="2191.500" y="117.200" width="8.500" height="13"/><rect x="2156.700" y="144" width="21.600" height="8.200"/><rect x="2213" y="144" width="21.600" height="8.200"/><rect x="-8" y="-4.100" width="16" height="8.200" transform="translate(2174,126.500) rotate(45)"/><rect x="-8" y="-4.100" width="16" height="8.200" transform="translate(2217.500,126.500) rotate(-45)"/><rect x="-8" y="-4.100" width="16" height="8.200" transform="translate(2174,169.300) rotate(-45)"/><path d="M2192.800 147.500 L2235.300 180.600 L2221 185.800 L2230 205 L2215 212 L2206 192.500 L2194.500 201.500 Q2191.600 203.300 2191.600 199.500 Z" stroke="#007bff" stroke-width="2" stroke-linejoin="round"/></svg>
<div style="position:absolute;left:2095.8px;top:1017.0px;width:200.0px;height:200.0px;background:#fff;border-radius:50%;box-shadow:0 8px 46px rgba(30,40,70,.11);"></div>
<svg style="left:2140px;top:1060px" width="112" height="100" viewBox="2140 1060 112 100" fill="#007bff"><rect x="2146.500" y="1065" width="10.200" height="90.300"/><rect x="2146.500" y="1145.100" width="100.300" height="10.200"/><rect x="2167" y="1100.300" width="19.800" height="50"/><rect x="2196.900" y="1080" width="20" height="70"/><rect x="2227" y="1120.300" width="19.800" height="30"/></svg>
</body></html>
